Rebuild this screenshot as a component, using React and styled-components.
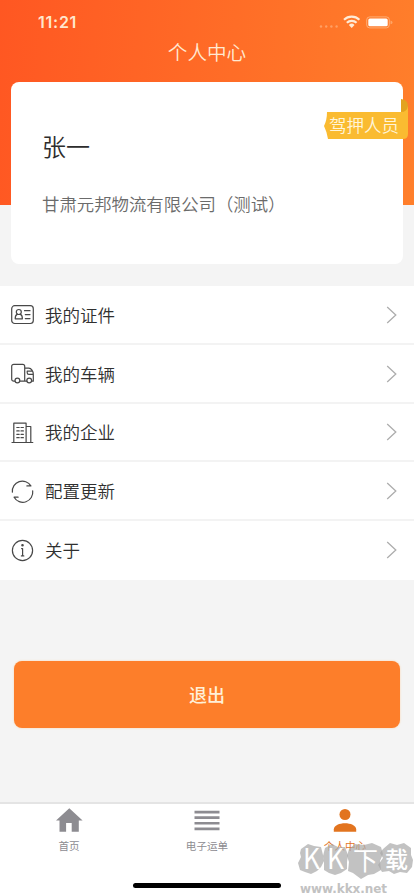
import React from "react";
import styled, { createGlobalStyle } from "styled-components";

const GlobalStyle = createGlobalStyle`
  *, *::before, *::after { box-sizing: border-box; }
  body { margin: 0; background: #f4f4f4; }
  button { font: inherit; border: 0; }
`;

const Screen = styled.div`
  width: 414px;
  height: 896px;
  position: relative;
  overflow: hidden;
  display: flex;
  flex-direction: column;
  background: #f4f4f4;
  color: #333;
  font-family: "Noto Sans CJK SC", sans-serif;
`;

const Header = styled.header`
  flex: none;
  height: 205px;
  padding: 0 11px;
  background: linear-gradient(95deg, #ff5722 0%, #ff7f2b 100%);
`;

const StatusBar = styled.div`
  height: 35px;
  padding: 9px 10px 0 27px;
  display: flex;
  justify-content: space-between;
  color: #ffe7cd;
  font: 600 16px/27px Inter, sans-serif;
`;

const StatusTime = styled.span`
  letter-spacing: 0.75px;
`;

const StatusIcons = styled.svg`
  width: 76px;
  height: 27px;
`;

const Title = styled.h1`
  margin: 0;
  height: 47px;
  color: #ffe9d2;
  font-size: 19.6px;
  font-weight: 350;
  line-height: 34px;
  text-align: center;
`;

const Card = styled.section`
  position: relative;
  height: 182px;
  padding: 46px 31px 0;
  border-radius: 8px;
  background: #fff;
`;

const Name = styled.h2`
  margin: 0;
  color: #2d2d2d;
  font-size: 24px;
  font-weight: 350;
  line-height: 36px;
`;

const Company = styled.p`
  margin: 25px 0 0;
  color: #6b6b6b;
  font-size: 17.4px;
  font-weight: 350;
  line-height: 30px;
  white-space: nowrap;
`;

const Ribbon = styled.div`
  position: absolute;
  top: 17px;
  left: 313px;
  width: 84px;
  height: 42px;
`;

const RibbonShape = styled.svg`
  position: absolute;
  inset: 0;
`;

const RibbonLabel = styled.span`
  position: relative;
  display: block;
  padding: 13px 0 0 5px;
  color: #fff5d9;
  font-size: 17.5px;
  font-weight: 350;
  line-height: 26px;
  white-space: nowrap;
`;

const Menu = styled.nav`
  flex: none;
  height: 295px;
  margin-top: 81px;
  display: grid;
  grid-template-rows: repeat(5, 1fr);
  background: #fff;
  border-bottom: 1px solid #f4f4f4;
`;

const MenuRow = styled.a`
  display: flex;
  align-items: center;
  padding: 1px 15px 0 10px;
  border-bottom: 2px solid ${(p) => (p.$last ? "transparent" : "#f3f3f3")};
`;

const RowIcon = styled.svg`
  width: 25px;
  height: 25px;
  fill: none;
  stroke: #484848;
  stroke-width: 1.2;
  stroke-linecap: round;
  stroke-linejoin: round;
`;

const RowLabel = styled.span`
  flex: 1;
  margin-left: 10px;
  color: #303030;
  font-size: 17.5px;
  font-weight: 350;
  line-height: 28px;
`;

const Chevron = styled.svg`
  width: 14px;
  height: 20px;
  fill: none;
  stroke: #adadad;
  stroke-width: 1.3;
`;

const LogoutButton = styled.button`
  flex: none;
  height: 67px;
  margin: 80px 14px 0;
  padding: 0 0 2px;
  border-radius: 8px;
  background: #fd7e2a;
  color: #fff0d8;
  font-size: 18px;
  font-weight: 500;
  box-shadow: 0 0 2px #ffcf9f;
`;

const TabBar = styled.footer`
  height: 94px;
  margin-top: auto;
  display: grid;
  grid-template-columns: repeat(3, 1fr);
  border-top: 2px solid #e4e4e4;
  background: #fff;
`;

const Tab = styled.a`
  display: flex;
  flex-direction: column;
  align-items: center;
  padding-top: 2px;
  color: ${(p) => (p.$active ? "#e2741f" : "#8d8c91")};
  font-size: 10.6px;
  line-height: 16px;
`;

const TabIcon = styled.svg`
  width: 30px;
  height: 30px;
  margin-bottom: 2px;
  fill: currentColor;
`;

const HomeIndicator = styled.div`
  position: absolute;
  left: 133px;
  bottom: 8px;
  width: 148px;
  height: 5px;
  border-radius: 3px;
  background: #000;
`;

const Watermark = styled.svg`
  position: absolute;
  left: 294px;
  top: 836px;
`;

const icons = {
  card: (
    <>
      <rect x="1.7" y="3.7" width="21.6" height="17.8" rx="3" />
      <circle cx="8.8" cy="10" r="2.5" />
      <path d="M7.4 12.1c-1.6.7-2.2 2.2-2.2 4.7h7.2c0-2.5-.6-4-2.2-4.7M14.5 8.7h5.5M15.3 12.6H20M15.3 16.6H20" />
    </>
  ),
  truck: (
    <>
      <path d="M5 20.2H3.7a2 2 0 0 1-2-2V5.3a2 2 0 0 1 2-2h9a2 2 0 0 1 2 2v14.9H9.7M14.7 7.2h4.1c2.5 0 4.5 3.1 4.5 6v7h-1.7M17 20.2h-2.3M17.2 10.1h4.9M17.2 10.1v1.6c0 1 .7 1.7 1.7 1.7h4.3" />
      <circle cx="7.4" cy="19.5" r="2.4" />
      <circle cx="19.2" cy="19.5" r="2.4" />
    </>
  ),
  building: (
    <>
      <path d="M2 22.5h20.8M3.8 22.5V3.2h12.3v19.3M16.1 6.5h4.7v16" />
      <path d="M6.8 7.5h2.4M11 7.5h2.4M6.8 10.9h2.4M11 10.9h2.4M6.8 14.3h2.4M11 14.3h2.4M6.8 17.7h2.4M11 17.7h2.4" />
    </>
  ),
  refresh: (
    <path d="M2.4 13.1A10 10 0 0 1 20.9 6.9M20.9 6.9h-4M22.7 11.9A10 10 0 0 1 4.1 18.2M4.1 18.2h4" />
  ),
  info: (
    <>
      <circle cx="12.5" cy="12.5" r="10.1" />
      <path d="M11.6 10.6h1v7.3M11.4 17.9h2.4" />
      <circle cx="12.5" cy="7.3" r=".7" fill="#484848" />
    </>
  ),
};

const menuItems = [
  ["card", "我的证件"],
  ["truck", "我的车辆"],
  ["building", "我的企业"],
  ["refresh", "配置更新"],
  ["info", "关于"],
];

const tabs = [
  { label: "首页", icon: <path d="M15.3 2.3 2 14.5H5.5V25.8h6.6v-8.9h5.6v8.9h7.1V14.5h3.8Z" /> },
  { label: "电子运单", icon: <path d="M2.5 4.7h25v2.7h-25zM2.5 10.2h25v2.7h-25zM2.5 15.9h25v2.7h-25zM2.5 21.5h25v2.7h-25z" /> },
  {
    label: "个人中心",
    active: true,
    icon: (
      <>
        <circle cx="15" cy="8.5" r="5.5" />
        <path d="M3.8 25.7v-2.4c0-4 5.9-6.1 11.2-6.1s11.2 2.1 11.2 6.1v2.4Z" />
      </>
    ),
  },
];

export default function App() {
  return (
    <Screen>
      <GlobalStyle />
      <Header>
        <StatusBar>
          <StatusTime>11:21</StatusTime>
          <StatusIcons viewBox="0 0 76 27" fill="none">
            <g fill="#ffb784" opacity=".65">
              <circle cx="4" cy="17.5" r="1.2" />
              <circle cx="9.2" cy="17.5" r="1.2" />
              <circle cx="14.4" cy="17.5" r="1.2" />
              <circle cx="19.6" cy="17.5" r="1.2" />
            </g>
            <g stroke="#ffebd6" strokeWidth="2.1">
              <path d="M27 10.7a11.2 11.2 0 0 1 15.4 0" />
              <path d="M29.8 13.8a7.1 7.1 0 0 1 9.8 0" />
            </g>
            <path d="m31.9 15.9 2.8 3.1 2.8-3.1a4 4 0 0 0-5.6 0Z" fill="#ffebd6" />
            <rect x="49.7" y="7.9" width="22.6" height="11" rx="3" stroke="#ffbd8c" strokeOpacity=".75" />
            <rect x="51.3" y="9.5" width="19.4" height="7.8" rx="1.6" fill="#fff" />
            <path d="M73.5 11.6q2 .4 2 1.8t-2 1.8Z" fill="#ffb67f" fillOpacity=".7" />
          </StatusIcons>
        </StatusBar>
        <Title>个人中心</Title>
        <Card>
          <Name>张一</Name>
          <Company>甘肃元邦物流有限公司（测试）</Company>
          <Ribbon>
            <RibbonShape width="84" height="42" viewBox="0 0 84 42">
              <path d="M77 0q7 1 7 7v11h-7Z" fill="#e2a31f" />
              <path d="M3 13h74q6 0 7-6v28q0 5-5 5H4q-1-7-4-13 3-6 3-14Z" fill="#fabb31" />
            </RibbonShape>
            <RibbonLabel>驾押人员</RibbonLabel>
          </Ribbon>
        </Card>
      </Header>
      <Menu>
        {menuItems.map(([icon, label], index) => (
          <MenuRow key={icon} $last={index === menuItems.length - 1}>
            <RowIcon viewBox="0 0 25 25">{icons[icon]}</RowIcon>
            <RowLabel>{label}</RowLabel>
            <Chevron viewBox="0 0 14 20">
              <path d="m2.2 2 8.6 8-8.6 8" />
            </Chevron>
          </MenuRow>
        ))}
      </Menu>
      <LogoutButton>退出</LogoutButton>
      <TabBar>
        {tabs.map((tab) => (
          <Tab key={tab.label} $active={tab.active}>
            <TabIcon viewBox="0 0 30 30">{tab.icon}</TabIcon>
            {tab.label}
          </Tab>
        ))}
      </TabBar>
      <HomeIndicator />
      <Watermark width="120" height="60" viewBox="0 0 120 60">
        <g fill="#a8a8a8" fillOpacity=".7">
          <path d="m7 13 7-5 6 2 7 1 2 8 1 6-3 6-4 4-6 3-6-2-5-2-2-7 3-6-1-4Z" />
          <path d="m31 12 7-4 6 3 7 0 3 8-1 7 0 7-6 4-6 2-6-2-5-3 0-8-1-6Z" />
          <path d="m55 13 6-5 9 1 8-2 9 4 2 7-3 7 1 9-7 4-6 1-7 4-8-6-5-2 1-9-2-6Z" />
          <path d="m89 13 7-6 7 2 7-2 7 5 0 7 2 5-1 7-5 6-7-1-6 2-5-3-7 1-4-7 5-7-3-5Z" />
        </g>
        <g fill="#fff" fontFamily="Noto Sans CJK SC, sans-serif">
          <text x="9" y="33" fontSize="28" textLength="17" lengthAdjust="spacingAndGlyphs">K</text>
          <text x="33" y="33" fontSize="28" textLength="17" lengthAdjust="spacingAndGlyphs">K</text>
          <text x="59" y="34" fontSize="25">下</text>
          <text x="91" y="32" fontSize="23" fontWeight="500">载</text>
        </g>
        <text x="6" y="57" fill="#c2c2c2" fontFamily="DejaVu Sans, sans-serif" fontSize="12" fontWeight="700" textLength="87">www.kkx.net</text>
      </Watermark>
    </Screen>
  );
}
